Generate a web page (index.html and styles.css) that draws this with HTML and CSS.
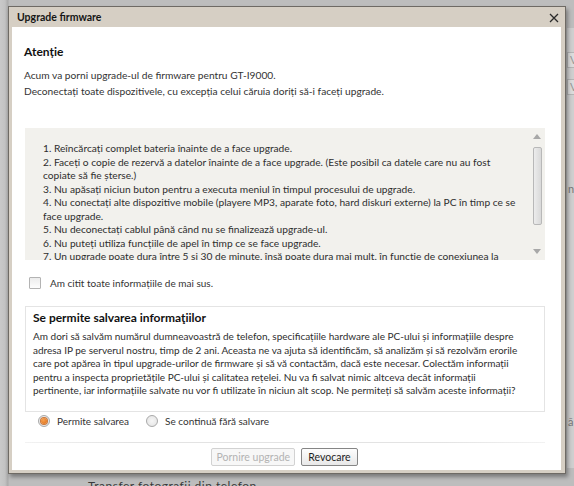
FILE: index.html
```html
<!DOCTYPE html>
<html lang="ro">
<head>
<meta charset="utf-8">
<title>Upgrade firmware</title>
<link rel="stylesheet" href="styles.css">
</head>
<body>
<div class="desktop">
  <div class="bg-right">
    <span class="bg-btn">V</span>
    <span class="bg-btn">V</span>
  </div>
  <span class="bg-text bg-text-1">nn</span>
  <span class="bg-text bg-text-2">ă</span>
  <span class="bg-text bg-bottom">Transfer fotografii din telefon</span>

  <div class="dialog">
    <div class="titlebar">
      <span class="title">Upgrade firmware</span>
      <svg class="close" width="10" height="10" viewBox="0 0 10 10"><path d="M1 1L9 9M9 1L1 9" stroke="#2b2b2b" stroke-width="1.3" fill="none"/></svg>
    </div>
    <div class="content">
      <h1 class="heading">Atenție</h1>
      <p class="intro">Acum va porni upgrade-ul de firmware pentru GT-I9000.<br>Deconectați toate dispozitivele, cu excepția celui căruia doriți să-i faceți upgrade.</p>

      <div class="scrollbox">
        <div class="scrolltext">
          1. Reîncărcați complet bateria înainte de a face upgrade.<br>
          2. Faceți o copie de rezervă a datelor înainte de a face upgrade. (Este posibil ca datele care nu au fost<br>
          copiate să fie șterse.)<br>
          3. Nu apăsați niciun buton pentru a executa meniul în timpul procesului de upgrade.<br>
          4. Nu conectați alte dispozitive mobile (playere MP3, aparate foto, hard diskuri externe) la PC în timp ce se<br>
          face upgrade.<br>
          5. Nu deconectați cablul până când nu se finalizează upgrade-ul.<br>
          6. Nu puteți utiliza funcțiile de apel în timp ce se face upgrade.<br>
          7. Un upgrade poate dura între 5 și 30 de minute, însă poate dura mai mult, în funcție de conexiunea la<br>
          rețea.
        </div>
        <div class="scrollbar">
          <span class="arrow up"></span>
          <span class="thumb"></span>
          <span class="arrow down"></span>
        </div>
      </div>

      <label class="check-row"><span class="checkbox"></span>Am citit toate informațiile de mai sus.</label>

      <div class="section">
        <h2 class="section-title">Se permite salvarea informaţiilor</h2>
        <p class="section-text">Am dori să salvăm numărul dumneavoastră de telefon, specificațiile hardware ale PC-ului și informațiile despre<br>adresa IP pe serverul nostru, timp de 2 ani. Aceasta ne va ajuta să identificăm, să analizăm și să rezolvăm erorile<br>care pot apărea în tipul upgrade-urilor de firmware și să vă contactăm, dacă este necesar. Colectăm informații<br>pentru a inspecta proprietățile PC-ului și calitatea rețelei. Nu va fi salvat nimic altceva decât informații<br>pertinente, iar informațiile salvate nu vor fi utilizate în niciun alt scop. Ne permiteți să salvăm aceste informații?</p>
      </div>

      <div class="radio-row">
        <label class="radio-opt"><span class="radio on"></span>Permite salvarea</label>
        <label class="radio-opt"><span class="radio"></span>Se continuă fără salvare</label>
      </div>

      <div class="separator"></div>

      <div class="buttons">
        <button class="btn disabled" disabled>Pornire upgrade</button>
        <button class="btn">Revocare</button>
      </div>
    </div>
  </div>
</div>
</body>
</html>
```
FILE: styles.css
```css
* { box-sizing: border-box; }
html, body { margin: 0; padding: 0; }
body {
  width: 574px;
  height: 486px;
  overflow: hidden;
  font-family: Lato, "Liberation Sans", sans-serif;
  font-size: 10px;
  color: #333;
}
.desktop {
  position: relative;
  width: 574px;
  height: 486px;
  overflow: hidden;
  background: linear-gradient(90deg, #c9c9c9 0, #c2c2c2 5px, #a9a9a9 8px, #bdbdbd 9px, #bdbdbd 100%);
  padding: 6px 0 0 8px;
}
.bg-right {
  position: absolute;
  left: 567px;
  top: 28px;
  width: 20px;
  height: 440px;
  background: #cfcfcf;
  display: flex;
  flex-direction: column;
  gap: 11px;
  padding-top: 24px;
}
.bg-btn {
  display: block;
  height: 16px;
  border: 1px solid #b5b5b5;
  background: #dcdcdc;
  color: #999;
  font-size: 11px;
  line-height: 14px;
  padding-left: 2px;
}
.bg-text { position: absolute; color: #777; font-size: 11px; }
.bg-text-1 { left: 568px; top: 182px; }
.bg-text-2 { left: 568px; top: 415px; }
.bg-bottom { left: 88px; top: 478px; color: #3a3a3a; font-size: 12px; letter-spacing: 0.5px; }

.dialog {
  position: relative;
  width: 558px;
  height: 468px;
  background: #d6cfc4;
  border: 1px solid #6e6a64;
  padding: 0 4px 3px 3px;
  box-shadow: 2px 3px 4px rgba(0, 0, 0, 0.35);
  display: flex;
  flex-direction: column;
}
.titlebar {
  height: 20px;
  display: flex;
  align-items: center;
  justify-content: space-between;
  padding: 0 2px 0 5px;
  flex: none;
}
.title {
  font-size: 10.5px;
  font-weight: bold;
  color: #151515;
}
.close { display: block; margin-top: 1px; }

.content {
  flex: 1;
  background: #fff;
  padding: 16px 0 0 12px;
  display: flex;
  flex-direction: column;
}
.heading {
  margin: 0;
  font-size: 12px;
  line-height: 18px;
  font-weight: bold;
  color: #111;
}
.intro {
  margin: 6px 0 0;
  font-size: 10.2px;
  line-height: 16px;
  white-space: nowrap;
  color: #333;
}
.scrollbox {
  margin: 29px 0 0 1px;
  width: 520px;
  height: 132px;
  background: #f2f1ed;
  display: flex;
  flex: none;
}
.scrolltext {
  flex: 1;
  overflow: hidden;
  padding: 14px 0 0 18px;
  font-size: 10.2px;
  line-height: 13.5px;
  white-space: nowrap;
  color: #2e2e2e;
}
.scrollbar {
  width: 12px;
  flex: none;
  display: flex;
  flex-direction: column;
  align-items: center;
  padding: 6px 0 6px;
  margin-right: 2px;
}
.arrow {
  width: 0;
  height: 0;
  border-left: 4px solid transparent;
  border-right: 4px solid transparent;
}
.arrow.up { border-bottom: 5px solid #a8a8a8; }
.arrow.down { border-top: 5px solid #a8a8a8; margin-top: auto; }
.thumb {
  margin-top: 8px;
  width: 9px;
  height: 78px;
  border: 1px solid #b8b8b8;
  border-radius: 2px;
  background: linear-gradient(90deg, #ececec, #d9d9d9);
}

.check-row {
  margin: 16px 0 0 5px;
  height: 14px;
  display: flex;
  align-items: center;
  gap: 9px;
  color: #333;
}
.checkbox {
  width: 12px;
  height: 12px;
  border: 1px solid #b3b3b3;
  border-radius: 1px;
  background: linear-gradient(#ececec, #fdfdfd);
  flex: none;
}

.section {
  margin: 16px 0 0 1px;
  width: 520px;
  height: 106px;
  border: 1px solid #e4e4e4;
  padding: 3px 0 0 7px;
  flex: none;
}
.section-title {
  margin: 0;
  font-size: 12px;
  line-height: 16px;
  font-weight: bold;
  color: #111;
}
.section-text {
  margin: 4px 0 0;
  line-height: 13.5px;
  white-space: nowrap;
  color: #2e2e2e;
}

.radio-row {
  margin: 1px 0 0 14px;
  height: 16px;
  display: flex;
  align-items: center;
  gap: 17px;
}
.radio-opt {
  display: flex;
  align-items: center;
  gap: 7px;
  color: #333;
}
.radio {
  width: 12px;
  height: 12px;
  border-radius: 50%;
  border: 1px solid #a9a9a9;
  background: radial-gradient(circle, #f6f6f6 0, #e2e2e2 100%);
  flex: none;
  display: flex;
  align-items: center;
  justify-content: center;
}
.radio.on::after {
  content: "";
  width: 6px;
  height: 6px;
  border-radius: 50%;
  background: radial-gradient(circle at 40% 35%, #f7a251, #dd6a10);
  box-shadow: 0 0 0 1px #c9773a;
}

.separator {
  margin: 13px 0 0 1px;
  width: 520px;
  height: 1px;
  background: linear-gradient(90deg, #f2f2f2, #e3e3e3 20%, #e3e3e3 80%, #f2f2f2);
  flex: none;
}
.buttons {
  margin-top: 5px;
  display: flex;
  justify-content: center;
  gap: 6px;
  padding-right: 16px;
}
.btn {
  height: 18px;
  font-family: Lato, "Liberation Sans", sans-serif;
  font-size: 10.5px;
  padding: 0 6px;
  white-space: nowrap;
  border-radius: 2px;
  border: 1px solid #858585;
  background: linear-gradient(#fdfdfd, #e8e8e8);
  color: #1e1e1e;
}
.btn.disabled {
  width: 84px;
  padding: 0;
  border-color: #d2d2d2;
  background: #f7f7f7;
  color: #b3b3b3;
}
```
